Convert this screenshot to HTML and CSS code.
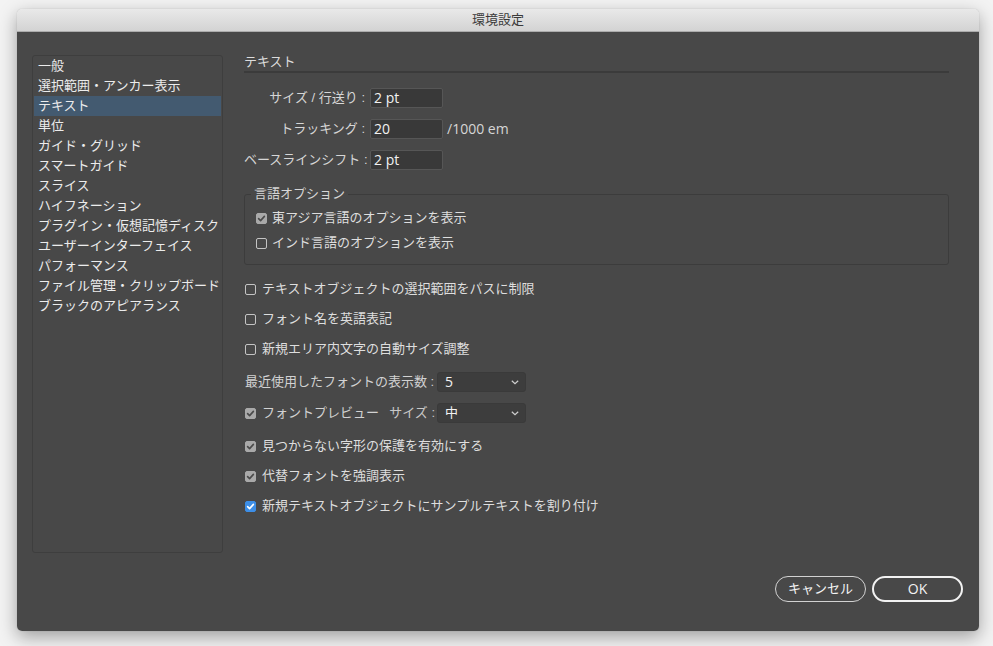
FILE: index.html
```html
<!DOCTYPE html>
<html lang="ja">
<head>
<meta charset="utf-8">
<title>環境設定</title>
<link rel="stylesheet" href="styles.css">
</head>
<body>
<div class="window">
  <div class="titlebar">環境設定</div>
  <div class="content">
    <div class="main">
      <ul class="sidebar">
        <li>一般</li>
        <li>選択範囲・アンカー表示</li>
        <li class="selected">テキスト</li>
        <li>単位</li>
        <li>ガイド・グリッド</li>
        <li>スマートガイド</li>
        <li>スライス</li>
        <li>ハイフネーション</li>
        <li>プラグイン・仮想記憶ディスク</li>
        <li>ユーザーインターフェイス</li>
        <li>パフォーマンス</li>
        <li>ファイル管理・クリップボード</li>
        <li>ブラックのアピアランス</li>
      </ul>
      <div class="panel">
        <div class="panel-title">テキスト</div>
        <div class="form-grid">
          <label class="flabel">サイズ / 行送り :</label>
          <div class="input">2 pt</div>
          <span></span>
          <label class="flabel">トラッキング :</label>
          <div class="input">20</div>
          <span class="unit">/1000 em</span>
          <label class="flabel">ベースラインシフト :</label>
          <div class="input">2 pt</div>
          <span></span>
        </div>
        <fieldset class="group">
          <legend>言語オプション</legend>
          <div class="grow">
            <span class="cb checked"><svg viewBox="0 0 11 11"><path d="M2.6 5.6 L4.6 7.6 L8.4 3.4"/></svg></span>
            <span>東アジア言語のオプションを表示</span>
          </div>
          <div class="grow">
            <span class="cb"></span>
            <span>インド言語のオプションを表示</span>
          </div>
        </fieldset>
        <div class="opts">
          <div class="row r1">
            <span class="cb"></span><span>テキストオブジェクトの選択範囲をパスに制限</span>
          </div>
          <div class="row">
            <span class="cb"></span><span>フォント名を英語表記</span>
          </div>
          <div class="row">
            <span class="cb"></span><span>新規エリア内文字の自動サイズ調整</span>
          </div>
          <div class="row srow">
            <span class="left">最近使用したフォントの表示数 :</span>
            <div class="select"><span class="val">5</span><svg viewBox="0 0 8 5"><path d="M0.8 0.8 L4 3.8 L7.2 0.8"/></svg></div>
          </div>
          <div class="row srow s2">
            <span class="left">
              <span class="cb checked"><svg viewBox="0 0 11 11"><path d="M2.6 5.6 L4.6 7.6 L8.4 3.4"/></svg></span>
              <span>フォントプレビュー</span>
              <span class="sz">サイズ :</span>
            </span>
            <div class="select"><span>中</span><svg viewBox="0 0 8 5"><path d="M0.8 0.8 L4 3.8 L7.2 0.8"/></svg></div>
          </div>
          <div class="row r3">
            <span class="cb checked"><svg viewBox="0 0 11 11"><path d="M2.6 5.6 L4.6 7.6 L8.4 3.4"/></svg></span><span>見つからない字形の保護を有効にする</span>
          </div>
          <div class="row">
            <span class="cb checked"><svg viewBox="0 0 11 11"><path d="M2.6 5.6 L4.6 7.6 L8.4 3.4"/></svg></span><span>代替フォントを強調表示</span>
          </div>
          <div class="row">
            <span class="cb blue"><svg viewBox="0 0 11 11"><path d="M2.6 5.6 L4.6 7.6 L8.4 3.4"/></svg></span><span>新規テキストオブジェクトにサンプルテキストを割り付け</span>
          </div>
        </div>
      </div>
    </div>
    <div class="footer">
      <button class="btn">キャンセル</button>
      <button class="btn primary">OK</button>
    </div>
  </div>
</div>
</body>
</html>
```
FILE: styles.css
```css
* { box-sizing: border-box; }
html, body { margin: 0; padding: 0; }
body {
  width: 993px;
  height: 646px;
  background: #f3f3f3;
  font-family: "Liberation Sans", "Noto Sans CJK JP", sans-serif;
  font-size: 13px;
  line-height: 16px;
  overflow: hidden;
}
.window {
  width: 962px;
  margin: 9px 0 0 17px;
  border-radius: 5px;
  overflow: hidden;
  box-shadow: 0 6px 18px rgba(0,0,0,0.35), 0 0 1px rgba(0,0,0,0.3);
}
.titlebar {
  height: 23px;
  border-bottom: 1px solid #acacac;
  background: linear-gradient(#e9e9e9, #d3d3d3);
  color: #3a3a3a;
  text-align: center;
  line-height: 22px;
  font-size: 13px;
}
.content {
  height: 599px;
  background: #484848;
  display: flex;
  flex-direction: column;
  padding: 22px 16px 29px 15px;
  color: #dedede;
}
.main { display: flex; align-items: flex-start; }
.sidebar {
  list-style: none;
  margin: 1px 0 0 0;
  padding: 0 1px;
  width: 191px;
  height: 498px;
  border: 1px solid #3e3e3e;
  border-radius: 3px;
  color: #ececec;
}
.sidebar li {
  height: 20px;
  line-height: 19px;
  padding-left: 4px;
  white-space: nowrap;
}
.sidebar li.selected { background: #435a70; }
.panel {
  margin-left: 21px;
  width: 705px;
}
.panel-title {
  height: 19px;
  line-height: 16px;
  border-bottom: 2px solid #3b3b3b;
  color: #dcdcdc;
}
.form-grid {
  margin-top: 15px;
  display: grid;
  grid-template-columns: 121px 73px auto;
  grid-auto-rows: 20px;
  column-gap: 5px;
  row-gap: 11px;
  align-items: center;
}
.flabel { text-align: right; white-space: nowrap; color: #d6d6d6; }
.unit {
  margin-left: -1px;
  color: #d6d6d6;
  font-family: "Open Sans", "Liberation Sans", sans-serif;
  font-size: 14px;
}
.input {
  height: 20px;
  background: #393939;
  border: 1px solid #565656;
  border-radius: 2px;
  padding-left: 3px;
  line-height: 18px;
  color: #f2f2f2;
  font-family: "Open Sans", "Liberation Sans", sans-serif;
  font-size: 14px;
}
.group {
  margin: 16px 0 0 0;
  padding: 8px 11px 13px 11px;
  border: 1px solid #3c3c3c;
  border-radius: 3px;
}
.group legend {
  padding: 0 3px;
  margin-left: -5px;
  line-height: 16px;
  color: #d6d6d6;
}
.grow {
  display: flex;
  align-items: center;
  height: 16px;
  gap: 5px;
}
.grow + .grow { margin-top: 9px; }
.cb {
  flex: none;
  width: 11px;
  height: 11px;
  border: 1px solid #c4c4c4;
  border-radius: 2px;
  display: inline-flex;
}
.cb svg { width: 11px; height: 11px; margin: -1px; }
.cb svg path { fill: none; stroke: #4a4a4a; stroke-width: 1.6; stroke-linecap: round; stroke-linejoin: round; }
.cb.checked { background: #a9a9a9; border-color: #a9a9a9; }
.cb.blue { background: #3d8ee6; border-color: #3d8ee6; }
.cb.blue svg path { stroke: #ffffff; }
.opts { padding-left: 1px; }
.row {
  display: flex;
  align-items: center;
  height: 20px;
  gap: 6px;
  margin-top: 10px;
  white-space: nowrap;
}
.row.r1 { margin-top: 14px; }
.row.srow { margin-top: 13px; gap: 0; }
.row.srow.s2 { margin-top: 11px; }
.row.r3 { margin-top: 13px; }
.left {
  width: 192px;
  display: flex;
  align-items: center;
  gap: 6px;
  color: #d2d2d2;
}
.sz { margin-left: auto; margin-right: 2px; color: #c8c8c8; }
.select {
  width: 89px;
  height: 20px;
  background: #3d3d3d;
  border: 1px solid #3a3a3a;
  border-radius: 3px;
  display: flex;
  align-items: center;
  justify-content: space-between;
  padding: 0 6px 0 7px;
  color: #f2f2f2;
}
.select .val { font-family: "Open Sans", "Liberation Sans", sans-serif; font-size: 14px; }
.select svg { width: 8px; height: 5px; }
.select svg path { fill: none; stroke: #cfcfcf; stroke-width: 1.2; }
.footer {
  margin-top: auto;
  display: flex;
  justify-content: flex-end;
  gap: 6px;
}
.btn {
  width: 91px;
  height: 26px;
  border-radius: 13px;
  background: transparent;
  border: 1px solid #d2d2d2;
  color: #f4f4f4;
  font-family: "Liberation Sans", "Noto Sans CJK JP", sans-serif;
  font-size: 13px;
  line-height: 16px;
  padding: 0;
}
.btn.primary { border: 2px solid #f2f2f2; font-family: "Open Sans", "Liberation Sans", sans-serif; font-size: 14px; }
```
